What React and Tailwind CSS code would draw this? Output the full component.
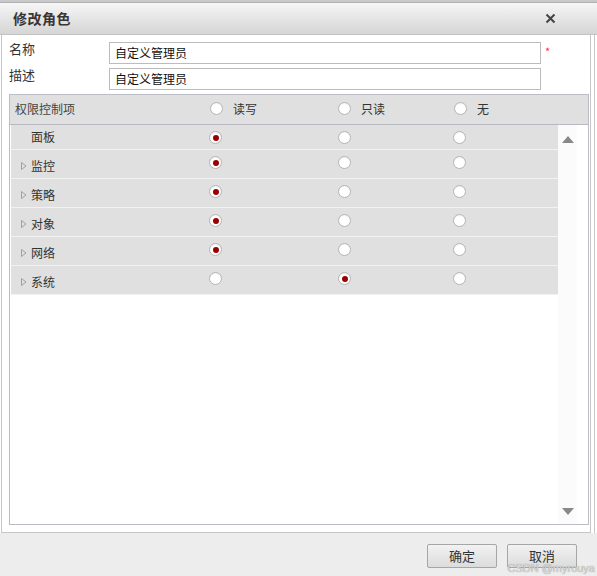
import React from "react";

const rows = [
  { name: "面板", value: 0, expand: false },
  { name: "监控", value: 0, expand: true },
  { name: "策略", value: 0, expand: true },
  { name: "对象", value: 0, expand: true },
  { name: "网络", value: 0, expand: true },
  { name: "系统", value: 1, expand: true },
];

function Radio({ checked }) {
  return (
    <span className="w-[13px] h-[13px] rounded-full border border-[#b4b4b4] bg-white flex items-center justify-center shrink-0 shadow-[inset_0_1px_1px_rgba(0,0,0,0.06)]">
      {checked && <span className="w-[6px] h-[6px] rounded-full bg-[#9a0000]" />}
    </span>
  );
}

function Caret() {
  return (
    <svg width="6" height="8" viewBox="0 0 6 8" className="shrink-0">
      <path d="M0.5 0.5 L5 4 L0.5 7.5 Z" fill="none" stroke="#a0a0a0" strokeWidth="1" />
    </svg>
  );
}

export default function App() {
  return (
    <div
      className="relative w-[597px] h-[576px] bg-white flex flex-col text-[#333] overflow-hidden"
      style={{ fontFamily: '"Noto Sans CJK SC", "Noto Sans", sans-serif' }}
    >
      {/* strip behind the dialog */}
      <div className="h-[3px] bg-[#c9c9c9] border-b border-[#b0b0b0] shrink-0" />

      {/* title bar */}
      <div className="h-[32px] shrink-0 flex items-center justify-between pl-[13px] pr-[41px] bg-gradient-to-b from-[#f6f6f6] to-[#d5d5d5] border-b border-[#c2c2c2]">
        <span className="text-[14px] font-bold text-[#3a3434] tracking-[0.5px]">修改角色</span>
        <svg width="11" height="11" viewBox="0 0 11 11">
          <path d="M1.5 1.5 L9.5 9.5 M9.5 1.5 L1.5 9.5" stroke="#444" strokeWidth="2" />
        </svg>
      </div>

      {/* body */}
      <div className="flex-1 flex min-h-0">
        <div className="ml-px w-[590px] border-x border-b border-[#c6c6c6] flex flex-col pt-[7px] pb-[7px] pl-[7px] pr-[1px]">
          <div className="flex items-start h-[22px]">
            <span className="w-[100px] text-[13px] leading-[16px] -mt-[1px]">名称</span>
            <div className="w-[432px] h-[22px] border border-[#bcbcbc] flex items-center px-[5px] text-[12px] text-[#111]">自定义管理员</div>
            <span className="ml-[4px] text-[#ff2a55] text-[11px] leading-[14px] mt-[2px]">*</span>
          </div>
          <div className="flex items-start h-[22px] mt-[4px]">
            <span className="w-[100px] text-[13px] leading-[16px] -mt-[1px]">描述</span>
            <div className="w-[432px] h-[22px] border border-[#bcbcbc] flex items-center px-[5px] text-[12px] text-[#111]">自定义管理员</div>
          </div>

          {/* permission table */}
          <div className="mt-[4px] flex-1 border border-[#bcbcc4] flex flex-col text-[12px] min-h-0">
            <div className="h-[30px] shrink-0 bg-[#e0e0e0] border-b border-[#b8b8c2] flex items-center pb-[2px]">
              <span className="w-[200px] pl-[5px] text-[#444]">权限控制项</span>
              <div className="w-[128px] flex items-center gap-[10px]">
                <Radio />
                <span>读写</span>
              </div>
              <div className="w-[116px] flex items-center gap-[10px]">
                <Radio />
                <span>只读</span>
              </div>
              <div className="flex items-center gap-[10px]">
                <Radio />
                <span>无</span>
              </div>
            </div>

            <div className="flex-1 flex min-h-0">
              <div className="ml-px w-[547px]">
                {rows.map((r, i) => (
                  <div
                    key={r.name}
                    className={`flex items-start bg-[#e0e0e0] border-b border-[#f2f2f2] ${i === 0 ? "h-[25px]" : "h-[29px]"}`}
                  >
                    <div className={`w-[198px] flex items-center pl-[10px] gap-[4px] ${i === 0 ? "pt-[4px]" : "pt-[8px]"}`}>
                      {r.expand ? <Caret /> : <span className="w-[6px]" />}
                      <span className="leading-[16px]">{r.name}</span>
                    </div>
                    <div className="w-[129px] pt-[6px]">
                      <Radio checked={r.value === 0} />
                    </div>
                    <div className="w-[115px] pt-[6px]">
                      <Radio checked={r.value === 1} />
                    </div>
                    <div className="pt-[6px]">
                      <Radio checked={r.value === 2} />
                    </div>
                  </div>
                ))}
              </div>
              <div className="w-[19px] bg-[#fbfbfb] flex flex-col items-center justify-between pt-[11px] pb-[9px]">
                <svg width="12" height="7" viewBox="0 0 12 7">
                  <path d="M6 0 L12 7 L0 7 Z" fill="#888" />
                </svg>
                <svg width="12" height="7" viewBox="0 0 12 7">
                  <path d="M0 0 L12 0 L6 7 Z" fill="#888" />
                </svg>
              </div>
            </div>
          </div>
        </div>
        <div className="w-[3px]" />
        <div className="w-px bg-[#c6c6c6]" />
      </div>

      {/* footer */}
      <div className="h-[43px] shrink-0 bg-[#ededed] flex items-center justify-end gap-[10px] pr-[20px] pt-[2px]">
        <button className="w-[70px] h-[24px] border border-[#a6a6a6] rounded-[2px] bg-gradient-to-b from-[#f2f2f2] to-[#dcdcdc] text-[13px] text-[#333]">
          确定
        </button>
        <button className="w-[70px] h-[24px] border border-[#a6a6a6] rounded-[2px] bg-gradient-to-b from-[#f2f2f2] to-[#dcdcdc] text-[13px] text-[#333]">
          取消
        </button>
      </div>

      <span
        className="absolute right-[2px] bottom-[2px] text-[11px] leading-[12px] text-[#d8d8d8] [text-shadow:0_0_1px_#888]"
        style={{ fontFamily: '"Liberation Sans", Arial, sans-serif' }}
      >
        CSDN @myrouya
      </span>
    </div>
  );
}
